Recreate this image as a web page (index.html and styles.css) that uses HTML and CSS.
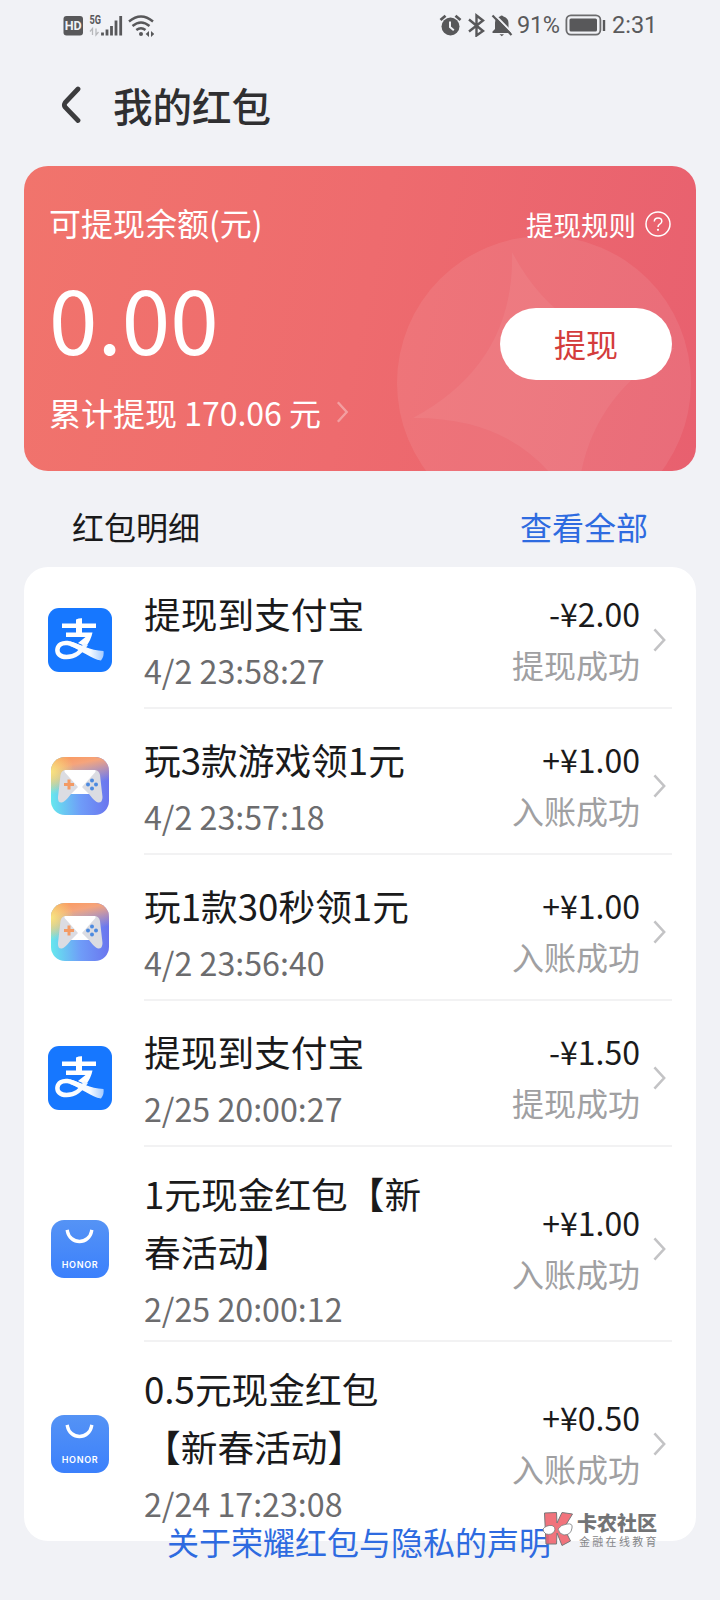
FILE: index.html
```html
<!DOCTYPE html>
<html lang="zh-CN">
<head>
<meta charset="utf-8">
<title>我的红包</title>
<link rel="stylesheet" href="styles.css">
</head>
<body>
<svg class="defs" width="0" height="0" aria-hidden="true">
  <defs>
    <linearGradient id="ribbon" x1="0" y1="0" x2="1" y2="0">
      <stop offset="0" stop-color="#fff"/><stop offset=".6" stop-color="#f4f9ff"/><stop offset="1" stop-color="#a5cbff"/>
    </linearGradient>
    <linearGradient id="gameBase" x1="0" y1=".55" x2="1" y2=".5">
      <stop offset="0" stop-color="#66e6ee"/><stop offset=".5" stop-color="#6f9cf8"/><stop offset="1" stop-color="#6a74ee"/>
    </linearGradient>
    <linearGradient id="gameTop" x1=".4" y1="0" x2=".6" y2="1">
      <stop offset="0" stop-color="#f99c66"/><stop offset=".12" stop-color="#f5a47c"/><stop offset=".5" stop-color="#f0a68c" stop-opacity="0"/>
    </linearGradient>
    <radialGradient id="gameLeft" cx="0" cy=".25" r=".4">
      <stop offset="0" stop-color="#f8e480"/><stop offset="1" stop-color="#f8e070" stop-opacity="0"/>
    </radialGradient>
    <linearGradient id="bag" x1="0" y1="0" x2="0" y2="1">
      <stop offset="0" stop-color="#5593f5"/><stop offset="1" stop-color="#3b80fc"/>
    </linearGradient>
    <symbol id="alipay" viewBox="0 0 64 64">
      <rect width="64" height="64" rx="11" fill="#1677ff"/>
      <path d="M28 11.500Q31 10 34 10.200V15.500H48V20H34V24.500H44.500Q43 32 38 38.500L30 35Q35 31 37.500 29H18V24.500H28V20H14V15.500H28Z" fill="#fff"/>
      <path d="M38 36C34 43 27 49 18.500 49C12 49 9 45.500 9.400 41.500C10 36.500 14.500 34.500 19.500 35C28 36 38 44.500 54 47.500" fill="none" stroke="url(#ribbon)" stroke-width="4.500"/>
      <path d="M22 33.500C32 36 42 42.500 55.500 43Q56.500 48 53 52.500C43 51 35 43 22 38Z" fill="url(#ribbon)"/>
    </symbol>
    <symbol id="game" viewBox="0 0 58 58">
      <rect width="58" height="58" rx="14" fill="url(#gameBase)"/>
      <rect width="58" height="58" rx="14" fill="url(#gameTop)"/>
      <rect width="58" height="58" rx="14" fill="url(#gameLeft)"/>
      <path d="M15 13H43Q48 13 49 18L51.500 40Q51.500 46 47 45.500Q44 45 38 37H20Q14 45 11 45.500Q6.500 46 7 40L9.500 18Q10.500 13 15 13Z" fill="#dbdce2"/>
      <path d="M14.500 13H43.500Q45.500 13.500 44 15.500L31 30L38 37H20L27 30L14 15.500Q12.500 13.500 14.500 13Z" fill="#fff"/>
      <path d="M18 22.500v10M13 27.500h10" stroke="#f39a64" stroke-width="3"/>
      <g fill="#4c8ae0"><circle cx="41" cy="23.500" r="2"/><circle cx="41" cy="31.500" r="2"/><circle cx="37" cy="27.500" r="2"/><circle cx="45" cy="27.500" r="2"/></g>
    </symbol>
    <symbol id="honor" viewBox="0 0 58 58">
      <rect width="58" height="58" rx="13" fill="url(#bag)"/>
      <path d="M16.500 11.500A12.200 12.200 0 0 0 40.500 11.500" fill="none" stroke="#fff" stroke-width="3.400" stroke-linecap="square"/>
      <text x="28.700" y="48.300" text-anchor="middle" class="honor-word" textLength="36">HONOR</text>
    </symbol>
    <symbol id="next" viewBox="0 0 14 26">
      <path d="M1.500 1.500L12 13L1.500 24.500" fill="none" stroke="currentColor" stroke-width="2.800"/>
    </symbol>
  </defs>
</svg>

<div class="screen">
  <div class="status">
    <svg width="94" height="24" viewBox="0 0 94 24">
      <rect x="3.500" y="3" width="19.500" height="19.500" rx="3" fill="#58585a"/>
      <text x="13.200" y="17.200" text-anchor="middle" class="hd">HD</text>
      <text x="29.500" y="11" class="fiveg" textLength="11.500" lengthAdjust="spacingAndGlyphs">5G</text>
      <path d="M32.500 22v-6.500l-2.500 3M36 15.500v6.500l2.500-3" stroke="#b7b8bb" fill="none" stroke-width="1.300"/>
      <path d="M42.500 19.500v3M47 16.500v6M51.500 13v9.500M56 7.500v15M60.700 3v19.500" stroke="#58585a" stroke-width="2.800"/>
      <g fill="none" stroke="#58585a" stroke-width="2.400"><path d="M69 8.500Q81 -1.500 93 8.500"/><path d="M72.500 13Q81 6 89.500 13"/><path d="M76.300 17Q81 13.300 85.500 17"/></g>
      <circle cx="81" cy="21" r="2" fill="#58585a"/>
      <path d="M89 18v6l-3.300-3zM91 18v6l3.300-3z" fill="#58585a"/>
    </svg>
    <div class="status-right">
      <svg width="74" height="24" viewBox="0 0 74 24">
        <circle cx="11.500" cy="13.500" r="9" fill="#58585a"/>
        <path d="M1.500 7L6.500 2.800M16.500 2.800L21.500 7" stroke="#58585a" stroke-width="2.800"/>
        <path d="M11 8.500v5.500l3.800 3.200" fill="none" stroke="#f1f2f6" stroke-width="2"/>
        <path d="M30 6.500L44 18L37.500 22.500V2.500L44 7.500L30 18.500" fill="none" stroke="#58585a" stroke-width="2.400"/>
        <path d="M53.500 20V18.500L56 16V10Q56 4.500 61 3.500Q62.500 1.500 64.500 3.500Q69.500 5 69.500 10V16L72 18.500V20Z" fill="#58585a"/>
        <path d="M60.500 21.300h4.500l-2.200 2z" fill="#58585a"/>
        <path d="M55 1L74 20.500" stroke="#f1f2f6" stroke-width="2"/>
        <path d="M53.500 2.500L72.500 22" stroke="#58585a" stroke-width="2.200"/>
      </svg>
      <span class="pct">91%</span>
      <svg width="42" height="22" viewBox="0 0 42 22">
        <rect x="1.400" y="1.400" width="34" height="19.200" rx="4.500" fill="none" stroke="#6c6c6e" stroke-width="1.800"/>
        <rect x="4.500" y="4.500" width="27.500" height="13" rx="1.500" fill="#58585a"/>
        <path d="M39 6v11" stroke="#58585a" stroke-width="2.400"/>
      </svg>
      <span class="clock">2:31</span>
    </div>
  </div>

  <header class="head">
    <svg width="20" height="38" viewBox="0 0 20 38"><path d="M17 3L4.200 16.500Q2.500 19 4.200 21.200L17 34.500" fill="none" stroke="#3c3c3e" stroke-width="4.800" stroke-linecap="round"/></svg>
    <h1>我的红包</h1>
  </header>

  <section class="balance">
    <svg class="emblem" width="294" height="235" viewBox="0 0 294 235">
      <circle cx="147" cy="147" r="147" fill="#fff" fill-opacity=".08"/>
      <path d="M115 16Q118 127 16 182Q132 181 180 278Q181 167 278 112Q167 115 115 16Z" fill="#fff" fill-opacity=".06"/>
    </svg>
    <div class="info">
      <div class="label">可提现余额(元)</div>
      <div class="sum">0.00</div>
      <div class="total">累计提现 170.06 元<svg width="13" height="22"><use href="#next"/></svg></div>
    </div>
    <div class="actions">
      <div class="rule">提现规则
        <svg width="26" height="26" viewBox="0 0 26 26"><circle cx="13" cy="13" r="12" fill="none" stroke="#fff" stroke-width="1.500"/><path d="M9.300 10.500Q9.500 7 13 7Q16.800 7 16.800 10.200Q16.800 12 14.800 13.100Q13 14 13 16" fill="none" stroke="#fff" stroke-width="1.500"/><circle cx="13" cy="18.800" r="1.100" fill="#fff"/></svg>
      </div>
      <div class="withdraw">提现</div>
    </div>
  </section>

  <div class="section-head"><span>红包明细</span><span class="all">查看全部</span></div>

  <main class="list">
    <div class="row"><svg class="icon big"><use href="#alipay"/></svg><div class="what"><div class="name">提现到支付宝</div><div class="time">4/2 23:58:27</div></div><div class="money"><div class="amount">-¥2.00</div><div class="state">提现成功</div></div><svg class="go"><use href="#next"/></svg></div>
    <div class="row"><svg class="icon"><use href="#game"/></svg><div class="what"><div class="name">玩3款游戏领1元</div><div class="time">4/2 23:57:18</div></div><div class="money"><div class="amount">+¥1.00</div><div class="state">入账成功</div></div><svg class="go"><use href="#next"/></svg></div>
    <div class="row"><svg class="icon"><use href="#game"/></svg><div class="what"><div class="name">玩1款30秒领1元</div><div class="time">4/2 23:56:40</div></div><div class="money"><div class="amount">+¥1.00</div><div class="state">入账成功</div></div><svg class="go"><use href="#next"/></svg></div>
    <div class="row"><svg class="icon big"><use href="#alipay"/></svg><div class="what"><div class="name">提现到支付宝</div><div class="time">2/25 20:00:27</div></div><div class="money"><div class="amount">-¥1.50</div><div class="state">提现成功</div></div><svg class="go"><use href="#next"/></svg></div>
    <div class="row"><svg class="icon"><use href="#honor"/></svg><div class="what"><div class="name">1元现金红包【新<br>春活动】</div><div class="time">2/25 20:00:12</div></div><div class="money"><div class="amount">+¥1.00</div><div class="state">入账成功</div></div><svg class="go"><use href="#next"/></svg></div>
    <div class="row"><svg class="icon"><use href="#honor"/></svg><div class="what"><div class="name">0.5元现金红包<br>【新春活动】</div><div class="time">2/24 17:23:08</div></div><div class="money"><div class="amount">+¥0.50</div><div class="state">入账成功</div></div><svg class="go"><use href="#next"/></svg></div>
  </main>

  <div class="privacy">关于荣耀红包与隐私的声明</div>
  <div class="mark">
    <svg width="32" height="36" viewBox="0 0 32 36">
      <path d="M2.500 2L14.500 1.500L15 12L20 1.500L30.500 3L22 17L28.500 30L20 34.500L15 22L14.500 33H4Z" fill="#f0646e" fill-opacity=".9" stroke="#77787a" stroke-width="1"/>
      <path d="M1 18Q4 14 10 14.500Q14 16 12.500 20Q10 24.500 4 23Q1 21 1 18ZM16 18Q19 13.500 25 13Q31 12 30 17Q29 24 22 24Q17 23 16 18Z" fill="#fff" stroke="#77787a" stroke-width=".8"/>
    </svg>
    <div><div class="mark-name">卡农社区</div><div class="mark-sub">金融在线教育</div></div>
  </div>
</div>
</body>
</html>
```
FILE: styles.css
```css
* { box-sizing: border-box; }
body {
  margin: 0;
  background: #f1f2f6;
  font-family: "Noto Sans CJK SC", sans-serif;
  font-weight: 400;
  color: #1a1a1b;
  text-spacing-trim: space-all;
}
svg { display: block; flex: none; }
.defs { position: absolute; }
.screen { position: relative; width: 720px; height: 1600px; overflow: hidden; }

.status {
  height: 49px;
  padding: 0 65px 0 60px;
  display: flex;
  align-items: center;
  justify-content: space-between;
  font-family: Roboto, sans-serif;
  font-size: 23.500px;
  color: #5a5a5c;
}
.status-right { display: flex; align-items: center; }
.pct { width: 52px; padding: 1px 0 0 4px; letter-spacing: -.3px; white-space: nowrap; }
.clock { width: 48px; padding: 1px 0 0 5px; white-space: nowrap; }
.hd { font: 700 12.500px Roboto, sans-serif; fill: #f1f2f6; }
.fiveg { font: 700 12px Roboto, sans-serif; fill: #58585a; }
.honor-word { font: 600 9px Inter, sans-serif; fill: #fff; }

.head { height: 117px; padding: 0 0 6px 61px; display: flex; align-items: center; gap: 32px; }
.head h1 { margin: 0; font-size: 39.500px; line-height: 58px; font-weight: 500; color: #2f2f31; }

.balance {
  position: relative;
  height: 305px;
  margin: 0 24px;
  padding: 32px 24px 0 25px;
  display: flex;
  justify-content: space-between;
  border-radius: 24px;
  overflow: hidden;
  color: #fff;
  background: linear-gradient(102deg, #f1746c 0%, #ee6b6e 50%, #e8606f 100%);
}
.emblem { position: absolute; left: 373px; top: 70px; }
.info, .actions { position: relative; }
.label { font-size: 32px; line-height: 48px; }
.sum { margin-top: 7px; font-size: 87.300px; line-height: 128px; }
.total { margin-top: 7px; display: flex; align-items: center; gap: 15px; font-size: 32px; line-height: 48px; }
.total svg { opacity: .35; }
.actions { display: flex; flex-direction: column; align-items: flex-end; }
.rule { margin: 2px 1px 0 0; display: flex; align-items: center; gap: 9px; font-size: 27.500px; line-height: 48px; }
.withdraw {
  margin-top: 60px;
  width: 172px;
  height: 72px;
  border-radius: 36px;
  background: #fff;
  color: #d43c3c;
  font-size: 32px;
  line-height: 71px;
  text-align: center;
}

.section-head { height: 96px; padding: 13px 72px 0; display: flex; justify-content: space-between; align-items: center; font-size: 32px; line-height: 48px; }
.all, .privacy { color: #2e6be0; }

.list { margin: 0 24px; background: #fff; border-radius: 24px; }
.row { position: relative; min-height: 146px; padding: 12.500px 30px 13.500px 24px; display: flex; align-items: center; }
.row:not(:last-child)::after { content: ""; position: absolute; left: 120px; right: 24px; bottom: 4px; height: 2px; background: #f2f2f3; }
.icon { width: 58px; height: 58px; margin: 1px 35px 0 3px; }
.icon.big { width: 64px; height: 64px; margin: 1px 32px 0 0; }
.what { flex: 1; }
.name { font-size: 36.700px; line-height: 58px; }
.time { padding-top: 3px; font-size: 32.200px; line-height: 50px; color: #6c6c6e; }
.money { text-align: right; font-size: 32px; line-height: 51px; margin: -1px 13px 0 0; }
.amount { font-size: 32px; }
.state { color: #a0a0a2; }
.go { width: 13px; height: 24px; margin-top: 1px; color: #c3c3c5; }

.privacy { position: absolute; left: 167px; top: 1517px; font-size: 32px; line-height: 48px; white-space: nowrap; }
.mark { position: absolute; left: 542px; top: 1511px; display: flex; gap: 3px; white-space: nowrap; color: #737476; }
.mark-name { font-size: 20px; line-height: 24px; font-weight: 900; }
.mark-sub { padding-left: 2px; font-size: 11px; line-height: 13px; letter-spacing: 2.300px; font-weight: 400; color: #858689; }
```
